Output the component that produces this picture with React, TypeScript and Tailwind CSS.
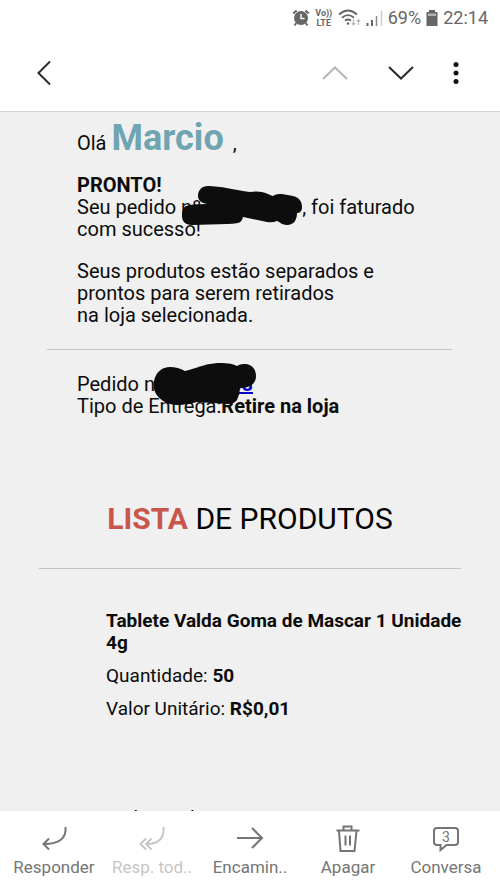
import type { ReactNode } from 'react';

const iconProps = {
    fill: 'none',
    stroke: 'currentColor',
    strokeWidth: 2,
} as const;

function StatusBar() {
    return (
        <div className="flex h-9 items-center justify-end gap-1 pr-3 text-[#666666]">
            <svg width="18" height="18" viewBox="0 0 18 18" aria-hidden="true">
                <circle cx="9" cy="9" r="7" fill="currentColor" />
                <path d="M1.200 4.600 4.600 1.600M16.800 4.600l-3.400-3M4.200 14.200 2.600 16.400M13.800 14.200l1.600 2.200" {...iconProps} />
                <path d="M9 5v4.500h3.500" fill="none" stroke="white" strokeWidth="1.400" />
            </svg>
            <div className="flex w-5 flex-col items-center text-[9px] font-bold leading-[10px]">
                <span>Vo))</span>
                <span>LTE</span>
            </div>
            <svg width="24" height="18" viewBox="0 0 24 18" fill="none" stroke="currentColor" strokeWidth="1.800" aria-hidden="true">
                <path d="M1 5.500q9-8 18 0M4 8.700q6-5.200 12 0M7 11.700q3-2.500 6 0" />
                <circle cx="10" cy="14.500" r="1.300" fill="currentColor" stroke="none" />
                <path d="M15.500 10.500v5M13.800 14l1.700 1.800 1.700-1.800M20.500 16v-5M18.800 12.500l1.700-1.800 1.700 1.800" stroke="#bbb" strokeWidth="1.200" />
            </svg>
            <svg width="18" height="18" viewBox="0 0 18 18" aria-hidden="true">
                <path d="M1.500 14v3M6 11v6" stroke="currentColor" strokeWidth="2" />
                <path d="M10.500 7v10" stroke="#888" strokeWidth="1.500" />
                <path d="M15.500 2v15" stroke="#ccc" strokeWidth="1.500" />
            </svg>
            <span className="text-lg leading-5">69%</span>
            <svg width="14" height="18" viewBox="0 0 14 18" aria-hidden="true">
                <path d="M4 1h6v2h2.500v14h-11V3H4z" fill="currentColor" />
                <path d="M3 4.500h8v2.500H3z" fill="#b5b5b5" />
            </svg>
            <span className="text-lg leading-5">22:14</span>
        </div>
    );
}

function MailHeader() {
    return (
        <div className="flex h-[76px] items-center justify-between border-b border-[#d2d5d5] px-8 pb-[2px] text-[#2b2b2b]">
            <button type="button" aria-label="Voltar" className="flex w-6 justify-center">
                <svg width="14" height="26" viewBox="0 0 14 26" {...iconProps}>
                    <path d="M13 1.500 1.500 13 13 24.500" />
                </svg>
            </button>
            <div className="flex items-center gap-[30px]">
                <div className="flex items-center gap-10">
                    <button type="button" aria-label="Mensagem anterior" disabled className="text-[#b5b5b5]">
                        <svg width="26" height="14" viewBox="0 0 26 14" {...iconProps}>
                            <path d="M1 13 13 1.500 25 13" />
                        </svg>
                    </button>
                    <button type="button" aria-label="Próxima mensagem">
                        <svg width="26" height="14" viewBox="0 0 26 14" {...iconProps}>
                            <path d="M1 1 13 12.500 25 1" />
                        </svg>
                    </button>
                </div>
                <button type="button" aria-label="Mais opções">
                    <svg width="24" height="24" viewBox="0 0 24 24" fill="#111">
                        <circle cx="12" cy="3.500" r="2.500" />
                        <circle cx="12" cy="12" r="2.500" />
                        <circle cx="12" cy="20.500" r="2.500" />
                    </svg>
                </button>
            </div>
        </div>
    );
}

function OrderMessage() {
    return (
        <section className="relative pl-[77px] pr-12 text-xl leading-[22px]">
            <p className="pt-1 leading-[44px]">
                Olá <strong className="text-4xl leading-[44px] text-[#6fa4b2]">Marcio </strong>,
            </p>
            <p className="mt-[9px]">
                <strong>PRONTO!</strong>
                <br />
                Seu pedido nº <span className="inline-block w-24" />, foi faturado
                <br />
                com sucesso!
            </p>
            <p className="mt-5">
                Seus produtos estão separados e
                <br />
                prontos para serem retirados
                <br />
                na loja selecionada.
            </p>
            <svg className="absolute left-[182px] top-[73px]" width="122" height="42" viewBox="182 185 122 42" fill="#0d0d0d" aria-hidden="true">
                <path d="M208 186C220 186 235 190 250 192C262 190 268 194 273 196C276 194 279 194 282 194L293 196C300 198 302 202 302 207C302 211 300 213 297 213C297 220 294 225 287 225C282 225 280 222 277 221Q272 223 267 222L243 217Q242 222 238 223Q233 224 227 224L192 225C185 225 182 221 182 216C182 211 183 208 186 206Q190 204 207 204C201 203 198 200 198 196C198 190 202 186 208 186Z" />
            </svg>
        </section>
    );
}

function OrderInfo() {
    return (
        <section className="relative pl-[77px] pt-[23px] text-xl leading-[22px]">
            <p>
                Pedido nº{' '}
                <a href="#pedido" className="inline-block w-[84px] text-right font-bold text-[#0b00c8] underline">
                    88
                </a>
            </p>
            <p>
                Tipo de Entrega:<strong>Retire na loja</strong>
            </p>
            <svg className="absolute left-[152px] top-[12px]" width="106" height="44" viewBox="152 362 106 44" fill="#0d0d0d" aria-hidden="true">
                <path d="M170 367Q178 367 185 371C195 369 205 363 221 363Q232 363 237 366C240 364 243 364 246 364C253 365 256 370 256 376C256 384 250 388 240 388Q240 394 237 400Q234 404 228 404L197 402Q188 405 180 405Q172 405 167 403Q158 399 155 392Q153 387 154 381C156 372 162 367 170 367Z" />
            </svg>
        </section>
    );
}

function ProductList() {
    return (
        <section>
            <h2 className="mt-[82px] text-center text-3xl leading-10 text-black">
                <strong className="text-[#c9564b]">LISTA</strong> DE PRODUTOS
            </h2>
            <hr className="mx-[39px] mt-[29px] border-[#c4c4c4]" />
            <div className="pl-[106px] pr-6 pt-[41px] text-[19px] leading-[22px]">
                <h3 className="font-bold">Tablete Valda Goma de Mascar 1 Unidade 4g</h3>
                <p className="mt-[11px]">
                    Quantidade: <strong>50</strong>
                </p>
                <p className="mt-[11px]">
                    Valor Unitário: <strong>R$0,01</strong>
                </p>
                <p className="mt-[87px]">Endereço loja</p>
            </div>
        </section>
    );
}

interface ActionProps {
    label: string;
    disabled?: boolean;
    children: ReactNode;
}

function Action({ label, disabled, children }: ActionProps) {
    return (
        <button
            type="button"
            disabled={disabled}
            className="flex min-w-0 flex-col items-center gap-1 text-[#757575] disabled:text-[#c6c6c6]"
        >
            <svg width="30" height="30" viewBox="0 0 30 30" {...iconProps}>
                {children}
            </svg>
            <span className="whitespace-nowrap text-[17px] leading-5">{label}</span>
        </button>
    );
}

function ActionBar() {
    return (
        <nav className="grid h-[78px] shrink-0 grid-cols-5 bg-white px-[5px] pt-3">
            <Action label="Responder">
                <path d="M26.500 4Q28 21 5 21M10 15.500 4.500 21l5.500 5.500" />
            </Action>
            <Action label="Resp. tod.." disabled>
                <path d="M26.500 4Q28 21 9 21M14.500 15.500 9 21l5.500 5.500M9 15.500 3.500 21 9 26.500" />
            </Action>
            <Action label="Encamin..">
                <path d="M2 15h25M17 5l10 10-10 10" />
            </Action>
            <Action label="Apagar">
                <path d="M3.500 7.500h23M10.500 7V3.500h8V7M6 8l1.500 20h14L23.500 8M12.500 12.500v10M17 12.500v10" />
            </Action>
            <Action label="Conversa">
                <path d="M6 5h18q3 0 3 3v11q0 3-3 3h-8.500L9.500 27v-5H6q-3 0-3-3V8q0-3 3-3z" />
                <text x="15" y="18.500" textAnchor="middle" fontSize="14" fill="currentColor" stroke="none">
                    3
                </text>
            </Action>
        </nav>
    );
}

export default function App() {
    return (
        <div className="flex h-screen flex-col bg-white font-['Roboto',sans-serif]">
            <header className="shrink-0">
                <StatusBar />
                <MailHeader />
            </header>
            <main className="min-h-0 flex-1 overflow-y-auto bg-[#f0f0f0] text-[#0c0c0c] [scrollbar-width:none]">
                <OrderMessage />
                <hr className="ml-[47px] mr-12 mt-[23px] border-[#c4c4c4]" />
                <OrderInfo />
                <ProductList />
            </main>
            <ActionBar />
        </div>
    );
}
